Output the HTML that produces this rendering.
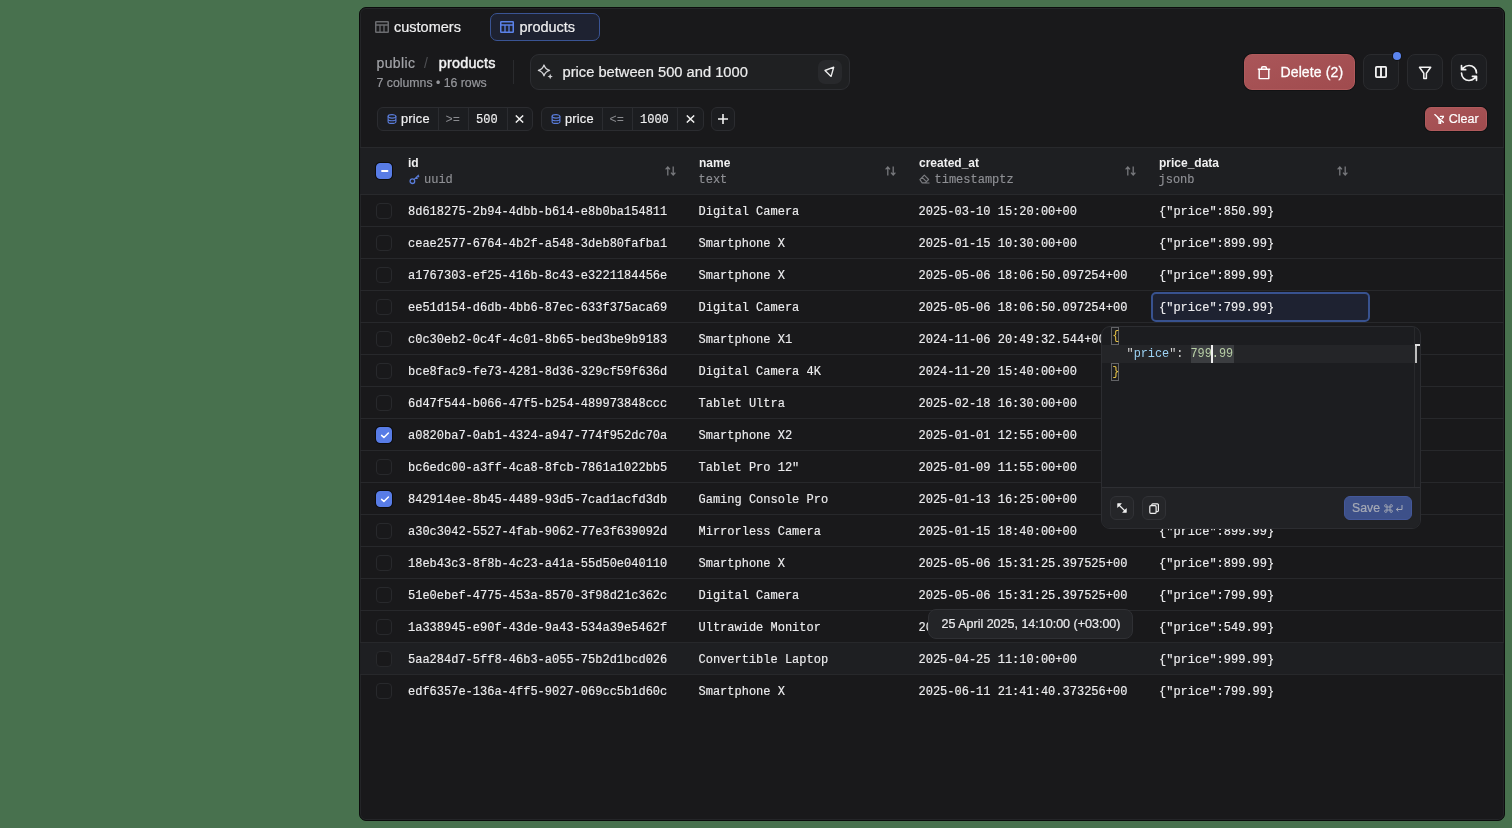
<!DOCTYPE html>
<html><head><meta charset="utf-8">
<style>
*{box-sizing:border-box;margin:0;padding:0}
html,body{width:1512px;height:828px;overflow:hidden;background:#48714e}
body{position:relative;font-family:"Liberation Sans",sans-serif;color:#ececee}
#w{position:absolute;left:0;top:0;width:1512px;height:828px;will-change:transform}
.a{position:absolute;white-space:nowrap;line-height:1}
.m{font-family:"Liberation Mono",monospace}
svg{display:block}
.panel{position:absolute;left:359px;top:7px;width:1146px;height:814px;background:#19191b;border:1px solid #0b0b0c;border-radius:7px;overflow:hidden}
.panel-in{position:absolute;left:0;top:0;right:0;bottom:0;border:1px solid #242528;border-radius:6px}
.btn{position:absolute;top:54px;width:36px;height:36px;border:1px solid #2a2b2e;border-radius:8px;background:#1d1e21}
.chip{position:absolute;top:107px;height:24px;border:1px solid #2b2c30;border-radius:6px;background:#1c1d20}
.dv{position:absolute;top:108px;width:1px;height:22px;background:#2b2c30}
.cb{position:absolute;left:376px;width:16px;height:16px;border:1px solid #28292c;border-radius:4px;background:#19191b}
.cb.on{background:#587ce6;border-color:#587ce6;box-shadow:0 0 0 1px #0c0c0d}
.cb svg{position:absolute;left:2px;top:2px}
.row{position:absolute;left:360px;width:1144px;height:32px;border-bottom:1px solid #27282b}
.row.hov{background:#1e1f22}
.t{position:absolute;top:206px;font-family:"Liberation Mono",monospace;font-size:12px;line-height:1;white-space:nowrap;color:#ededef;-webkit-text-stroke:0.15px currentColor}
.sort{position:absolute;top:166px}
.ss{-webkit-text-stroke:0.2px currentColor}
.ms{-webkit-text-stroke:0.15px currentColor}
</style></head>
<body>
<div id="w">
<div class="panel"><div class="panel-in"></div></div>

<!-- tabs -->
<svg class="a" style="left:375px;top:21px" width="14" height="12" viewBox="0 0 14 12"><rect x="0.75" y="0.75" width="12.5" height="10.5" rx="0.5" fill="none" stroke="#6b6c70" stroke-width="1.5"/><line x1="0.5" y1="4" x2="13.5" y2="4" stroke="#6b6c70" stroke-width="1.5"/><line x1="5" y1="4" x2="5" y2="11.5" stroke="#6b6c70" stroke-width="1.3"/><line x1="9" y1="4" x2="9" y2="11.5" stroke="#6b6c70" stroke-width="1.3"/></svg>
<div class="a ss" style="left:394px;top:19.6px;font-size:14.5px;color:#f0f0f1">customers</div>
<div class="a" style="left:490px;top:13px;width:110px;height:28px;background:#1e2231;border:1px solid #3a5494;border-radius:7px"></div>
<svg class="a" style="left:500px;top:21px" width="14" height="12" viewBox="0 0 14 12"><rect x="0.75" y="0.75" width="12.5" height="10.5" rx="0.5" fill="none" stroke="#5b82ea" stroke-width="1.5"/><line x1="0.5" y1="4" x2="13.5" y2="4" stroke="#5b82ea" stroke-width="1.5"/><line x1="5" y1="4" x2="5" y2="11.5" stroke="#5b82ea" stroke-width="1.3"/><line x1="9" y1="4" x2="9" y2="11.5" stroke="#5b82ea" stroke-width="1.3"/></svg>
<div class="a ss" style="left:519.5px;top:19.6px;font-size:14.5px;color:#f0f0f1">products</div>

<!-- breadcrumb -->
<div class="a ss" style="left:376.5px;top:56px;font-size:14px;letter-spacing:0.4px;color:#a3a4a9">public</div>
<div class="a" style="left:424px;top:56px;font-size:14px;color:#4f5054">/</div>
<div class="a" style="left:438.8px;top:56px;font-size:14.4px;letter-spacing:0.2px;-webkit-text-stroke:0.45px currentColor;color:#f2f2f3">products</div>
<div class="a ss" style="left:376.5px;top:77px;font-size:12.3px;color:#96979c">7 columns • 16 rows</div>
<div class="a" style="left:513px;top:60px;width:1px;height:24px;background:#2a2b2e"></div>

<!-- search -->
<div class="a" style="left:530px;top:54px;width:320px;height:36px;border:1px solid #2d2e32;border-radius:9px;background:#1f2022"></div>
<svg class="a" style="left:536px;top:62px" width="18" height="18" viewBox="0 0 18 18"><path d="M8 3 Q9.3 7.1 13.6 8.4 Q9.3 9.7 8 13.8 Q6.7 9.7 2.4 8.4 Q6.7 7.1 8 3Z" fill="none" stroke="#d2d2d5" stroke-width="1.3" stroke-linejoin="round"/><path d="M14.2 11.8 Q14.5 14.3 16.9 14.6 Q14.5 14.9 14.2 17.3 Q13.9 14.9 11.5 14.6 Q13.9 14.3 14.2 11.8Z" fill="#cfcfd2"/></svg>
<div class="a ss" style="left:562.5px;top:64.5px;font-size:14.7px;color:#ededee">price between 500 and 1000</div>
<div class="a" style="left:817.5px;top:60px;width:24px;height:24px;border-radius:7px;background:#28292c"></div>
<svg class="a" style="left:820px;top:63px" width="18" height="18" viewBox="0 0 18 18"><path d="M5 7.5 L13.7 4.2 L11.1 13.4 Z" fill="none" stroke="#ededee" stroke-width="1.35" stroke-linejoin="round"/></svg>

<!-- right buttons -->
<div class="a" style="left:1244px;top:54px;width:111px;height:36px;border-radius:8px;background:linear-gradient(160deg,#aa5659,#a04b4e);border:1px solid #b05a5c;box-shadow:0 0 0 1px #111214"></div>
<svg class="a" style="left:1257px;top:65.8px" width="14" height="14" viewBox="0 0 14 14"><path d="M0.8 3.2 H13.2 M4.6 3.2 V2 Q4.6 0.8 5.8 0.8 H8.2 Q9.4 0.8 9.4 2 V3.2 M2.2 3.2 V12.6 H11.8 V3.2" fill="none" stroke="#fff" stroke-width="1.45" stroke-linejoin="round"/></svg>
<div class="a" style="left:1280.5px;top:64.8px;font-size:14px;letter-spacing:0.12px;color:#fff;-webkit-text-stroke:0.3px #fff">Delete (2)</div>
<div class="btn" style="left:1363px"></div>
<svg class="a" style="left:1375px;top:66px" width="12" height="12" viewBox="0 0 12 12"><rect x="0.9" y="0.9" width="10.2" height="10.2" rx="0.8" fill="none" stroke="#f2f2f2" stroke-width="1.8"/><line x1="6" y1="0.9" x2="6" y2="11.1" stroke="#f2f2f2" stroke-width="1.9"/></svg>
<div class="a" style="left:1393px;top:51.7px;width:8px;height:8px;border-radius:50%;background:#5b84ee;box-shadow:0 0 0 1px #121214"></div>
<div class="btn" style="left:1407px"></div>
<svg class="a" style="left:1418px;top:65.5px" width="14" height="14" viewBox="0 0 14 14"><path d="M1.5 1.3 H12.7 L8.4 7.3 V12.6 H5.8 V7.3 Z" fill="none" stroke="#f2f2f2" stroke-width="1.5" stroke-linejoin="round"/></svg>
<div class="btn" style="left:1451px"></div>
<svg class="a" style="left:1459.2px;top:63px" width="20" height="20" viewBox="0 0 24 24"><path d="M21 12a9 9 0 0 0-9-9 9.75 9.75 0 0 0-6.74 2.74L3 8 M3 3v5h5 M3 12a9 9 0 0 0 9 9 9.75 9.75 0 0 0 6.74-2.74L21 16 M16 16h5v5" fill="none" stroke="#f2f2f2" stroke-width="2" stroke-linecap="round" stroke-linejoin="round"/></svg>

<!-- chips -->
<div class="chip" style="left:377px;width:156px"></div>
<div class="dv" style="left:437.5px"></div><div class="dv" style="left:467.5px"></div><div class="dv" style="left:506.5px"></div>
<svg class="a" style="left:386.5px;top:114px" width="10" height="10" viewBox="0 0 11 11"><ellipse cx="5.5" cy="2.6" rx="4.3" ry="1.9" fill="none" stroke="#5a7ddb" stroke-width="1.2"/><path d="M1.2 2.6 V8.4 C1.2 9.5 3.1 10.3 5.5 10.3 C7.9 10.3 9.8 9.5 9.8 8.4 V2.6 M1.2 5.5 C1.2 6.6 3.1 7.4 5.5 7.4 C7.9 7.4 9.8 6.6 9.8 5.5" fill="none" stroke="#5a7ddb" stroke-width="1.2"/></svg>
<div class="a ss" style="left:401px;top:113px;font-size:12.8px;letter-spacing:0.2px;color:#f0f0f1">price</div>
<div class="a m" style="left:445.5px;top:114.2px;font-size:12px;color:#8b8c90">&gt;=</div>
<div class="a m ms" style="left:476px;top:114.2px;font-size:12px;color:#f0f0f1">500</div>
<svg class="a" style="left:515px;top:115px" width="9" height="8" viewBox="0 0 9 8"><path d="M0.8 0.4 L8.2 7.6 M8.2 0.4 L0.8 7.6" stroke="#f0f0f0" stroke-width="1.4"/></svg>

<div class="chip" style="left:540.5px;width:163px"></div>
<div class="dv" style="left:601.5px"></div><div class="dv" style="left:631.5px"></div><div class="dv" style="left:676.5px"></div>
<svg class="a" style="left:550.5px;top:114px" width="10" height="10" viewBox="0 0 11 11"><ellipse cx="5.5" cy="2.6" rx="4.3" ry="1.9" fill="none" stroke="#5a7ddb" stroke-width="1.2"/><path d="M1.2 2.6 V8.4 C1.2 9.5 3.1 10.3 5.5 10.3 C7.9 10.3 9.8 9.5 9.8 8.4 V2.6 M1.2 5.5 C1.2 6.6 3.1 7.4 5.5 7.4 C7.9 7.4 9.8 6.6 9.8 5.5" fill="none" stroke="#5a7ddb" stroke-width="1.2"/></svg>
<div class="a ss" style="left:565px;top:113px;font-size:12.8px;letter-spacing:0.2px;color:#f0f0f1">price</div>
<div class="a m" style="left:609.5px;top:114.2px;font-size:12px;color:#8b8c90">&lt;=</div>
<div class="a m ms" style="left:640px;top:114.2px;font-size:12px;color:#f0f0f1">1000</div>
<svg class="a" style="left:686px;top:115px" width="9" height="8" viewBox="0 0 9 8"><path d="M0.8 0.4 L8.2 7.6 M8.2 0.4 L0.8 7.6" stroke="#f0f0f0" stroke-width="1.4"/></svg>

<div class="chip" style="left:711px;width:24px"></div>
<svg class="a" style="left:718px;top:114px" width="10" height="10" viewBox="0 0 10 10"><path d="M5 0 V10 M0 5 H10" stroke="#f2f2f2" stroke-width="1.6"/></svg>

<div class="a" style="left:1425px;top:107px;width:62px;height:24px;border-radius:6px;background:linear-gradient(160deg,#aa5659,#a04b4e);border:1px solid #b05a5c;box-shadow:0 0 0 1px #111214"></div>
<svg class="a" style="left:1434px;top:114px" width="10" height="10" viewBox="0 0 10 10"><path d="M0.8 0.6 L9.3 8.3 M6.4 2.4 H9.8 L8 4.6 M3.4 3.2 L5.1 5.6 V10.4 H6.6 V7.2" fill="none" stroke="#fff" stroke-width="1.3" stroke-linejoin="round" stroke-linecap="round"/></svg>
<div class="a ss" style="left:1448.8px;top:113.1px;font-size:12.5px;color:#fff">Clear</div>

<!-- table header -->
<div class="a" style="left:360px;top:147px;width:1144px;height:48px;background:#1e1f22;border-top:1px solid #28292c;border-bottom:1px solid #28292c"></div>
<div class="cb on" style="top:163px"><svg width="12" height="12" viewBox="0 0 12 12"><path d="M3 5 H8.5" stroke="#fff" stroke-width="1.8" stroke-linecap="round"/></svg></div>
<div class="a" style="left:408px;top:156.7px;font-size:12px;font-weight:bold;color:#f0f0f1">id</div>
<svg class="a" style="left:409px;top:174px" width="11" height="11" viewBox="0 0 11 11"><circle cx="3.4" cy="7.2" r="2.3" fill="none" stroke="#5a7ddb" stroke-width="1.3"/><path d="M5 5.6 L9.8 0.8 M7.4 3.2 L8.7 4.5 M8.8 1.8 L10.1 3.1" fill="none" stroke="#5a7ddb" stroke-width="1.2"/></svg>
<div class="a m" style="left:424px;top:173.7px;font-size:12px;color:#8f9095;-webkit-text-stroke:0.15px currentColor">uuid</div>
<div class="a" style="left:699px;top:156.7px;font-size:12px;font-weight:bold;color:#f0f0f1">name</div>
<div class="a m" style="left:698.5px;top:173.7px;font-size:12px;color:#8f9095;-webkit-text-stroke:0.15px currentColor">text</div>
<div class="a" style="left:919px;top:156.7px;font-size:12px;font-weight:bold;color:#f0f0f1">created_at</div>
<svg class="a" style="left:919px;top:174px" width="11" height="10" viewBox="0 0 11 10"><path d="M0.9 5.6 L5.3 1.2 L9.6 5.5 L6.2 8.9 H3.2 Z M3.1 3.4 L7.4 7.7 M5.5 9 H10.5" fill="none" stroke="#7b7c80" stroke-width="1.1" stroke-linejoin="round"/></svg>
<div class="a m" style="left:934.5px;top:173.7px;font-size:12px;color:#8f9095;-webkit-text-stroke:0.15px currentColor">timestamptz</div>
<div class="a" style="left:1159px;top:156.7px;font-size:12px;font-weight:bold;color:#f0f0f1">price_data</div>
<div class="a m" style="left:1158.5px;top:173.7px;font-size:12px;color:#8f9095;-webkit-text-stroke:0.15px currentColor">jsonb</div>
<svg class="sort" style="left:665px" width="11" height="10" viewBox="0 0 11 10"><path d="M2.8 9.5 V1.2 M0.6 3.4 L2.8 1 L5 3.4 M8.2 0.5 V8.8 M6 6.6 L8.2 9 L10.4 6.6" fill="none" stroke="#77787c" stroke-width="1.3"/></svg>
<svg class="sort" style="left:885px" width="11" height="10" viewBox="0 0 11 10"><path d="M2.8 9.5 V1.2 M0.6 3.4 L2.8 1 L5 3.4 M8.2 0.5 V8.8 M6 6.6 L8.2 9 L10.4 6.6" fill="none" stroke="#77787c" stroke-width="1.3"/></svg>
<svg class="sort" style="left:1125px" width="11" height="10" viewBox="0 0 11 10"><path d="M2.8 9.5 V1.2 M0.6 3.4 L2.8 1 L5 3.4 M8.2 0.5 V8.8 M6 6.6 L8.2 9 L10.4 6.6" fill="none" stroke="#77787c" stroke-width="1.3"/></svg>
<svg class="sort" style="left:1337px" width="11" height="10" viewBox="0 0 11 10"><path d="M2.8 9.5 V1.2 M0.6 3.4 L2.8 1 L5 3.4 M8.2 0.5 V8.8 M6 6.6 L8.2 9 L10.4 6.6" fill="none" stroke="#77787c" stroke-width="1.3"/></svg>

<div class="row" style="top:195px"></div>
<div class="row" style="top:227px"></div>
<div class="row" style="top:259px"></div>
<div class="row" style="top:291px"></div>
<div class="row" style="top:323px"></div>
<div class="row" style="top:355px"></div>
<div class="row" style="top:387px"></div>
<div class="row" style="top:419px"></div>
<div class="row" style="top:451px"></div>
<div class="row" style="top:483px"></div>
<div class="row" style="top:515px"></div>
<div class="row" style="top:547px"></div>
<div class="row" style="top:579px"></div>
<div class="row" style="top:611px"></div>
<div class="row hov" style="top:643px"></div>
<div class="row" style="top:675px;border-bottom:0"></div>
<div class="cb" style="top:203px"></div>
<div class="t" style="left:408px;top:206px">8d618275-2b94-4dbb-b614-e8b0ba154811</div><div class="t" style="left:698.5px;top:206px">Digital Camera</div><div class="t" style="left:918.5px;top:206px">2025-03-10 15:20:00+00</div>
<div class="t" style="left:1159px;top:206px">{&quot;price&quot;:850.99}</div>
<div class="cb" style="top:235px"></div>
<div class="t" style="left:408px;top:238px">ceae2577-6764-4b2f-a548-3deb80fafba1</div><div class="t" style="left:698.5px;top:238px">Smartphone X</div><div class="t" style="left:918.5px;top:238px">2025-01-15 10:30:00+00</div>
<div class="t" style="left:1159px;top:238px">{&quot;price&quot;:899.99}</div>
<div class="cb" style="top:267px"></div>
<div class="t" style="left:408px;top:270px">a1767303-ef25-416b-8c43-e3221184456e</div><div class="t" style="left:698.5px;top:270px">Smartphone X</div><div class="t" style="left:918.5px;top:270px">2025-05-06 18:06:50.097254+00</div>
<div class="t" style="left:1159px;top:270px">{&quot;price&quot;:899.99}</div>
<div class="cb" style="top:299px"></div>
<div class="t" style="left:408px;top:302px">ee51d154-d6db-4bb6-87ec-633f375aca69</div><div class="t" style="left:698.5px;top:302px">Digital Camera</div><div class="t" style="left:918.5px;top:302px">2025-05-06 18:06:50.097254+00</div>
<div class="cb" style="top:331px"></div>
<div class="t" style="left:408px;top:334px">c0c30eb2-0c4f-4c01-8b65-bed3be9b9183</div><div class="t" style="left:698.5px;top:334px">Smartphone X1</div><div class="t" style="left:918.5px;top:334px">2024-11-06 20:49:32.544+00</div>
<div class="cb" style="top:363px"></div>
<div class="t" style="left:408px;top:366px">bce8fac9-fe73-4281-8d36-329cf59f636d</div><div class="t" style="left:698.5px;top:366px">Digital Camera 4K</div><div class="t" style="left:918.5px;top:366px">2024-11-20 15:40:00+00</div>
<div class="cb" style="top:395px"></div>
<div class="t" style="left:408px;top:398px">6d47f544-b066-47f5-b254-489973848ccc</div><div class="t" style="left:698.5px;top:398px">Tablet Ultra</div><div class="t" style="left:918.5px;top:398px">2025-02-18 16:30:00+00</div>
<div class="cb on" style="top:427px"><svg width="12" height="12" viewBox="0 0 12 12"><path d="M2.6 5.4 L4.9 7.5 L9.4 3" fill="none" stroke="#fff" stroke-width="1.5" stroke-linecap="round" stroke-linejoin="round"/></svg></div>
<div class="t" style="left:408px;top:430px">a0820ba7-0ab1-4324-a947-774f952dc70a</div><div class="t" style="left:698.5px;top:430px">Smartphone X2</div><div class="t" style="left:918.5px;top:430px">2025-01-01 12:55:00+00</div>
<div class="cb" style="top:459px"></div>
<div class="t" style="left:408px;top:462px">bc6edc00-a3ff-4ca8-8fcb-7861a1022bb5</div><div class="t" style="left:698.5px;top:462px">Tablet Pro 12&quot;</div><div class="t" style="left:918.5px;top:462px">2025-01-09 11:55:00+00</div>
<div class="cb on" style="top:491px"><svg width="12" height="12" viewBox="0 0 12 12"><path d="M2.6 5.4 L4.9 7.5 L9.4 3" fill="none" stroke="#fff" stroke-width="1.5" stroke-linecap="round" stroke-linejoin="round"/></svg></div>
<div class="t" style="left:408px;top:494px">842914ee-8b45-4489-93d5-7cad1acfd3db</div><div class="t" style="left:698.5px;top:494px">Gaming Console Pro</div><div class="t" style="left:918.5px;top:494px">2025-01-13 16:25:00+00</div>
<div class="cb" style="top:523px"></div>
<div class="t" style="left:408px;top:526px">a30c3042-5527-4fab-9062-77e3f639092d</div><div class="t" style="left:698.5px;top:526px">Mirrorless Camera</div><div class="t" style="left:918.5px;top:526px">2025-01-15 18:40:00+00</div>
<div class="t" style="left:1159px;top:526px">{&quot;price&quot;:899.99}</div>
<div class="cb" style="top:555px"></div>
<div class="t" style="left:408px;top:558px">18eb43c3-8f8b-4c23-a41a-55d50e040110</div><div class="t" style="left:698.5px;top:558px">Smartphone X</div><div class="t" style="left:918.5px;top:558px">2025-05-06 15:31:25.397525+00</div>
<div class="t" style="left:1159px;top:558px">{&quot;price&quot;:899.99}</div>
<div class="cb" style="top:587px"></div>
<div class="t" style="left:408px;top:590px">51e0ebef-4775-453a-8570-3f98d21c362c</div><div class="t" style="left:698.5px;top:590px">Digital Camera</div><div class="t" style="left:918.5px;top:590px">2025-05-06 15:31:25.397525+00</div>
<div class="t" style="left:1159px;top:590px">{&quot;price&quot;:799.99}</div>
<div class="cb" style="top:619px"></div>
<div class="t" style="left:408px;top:622px">1a338945-e90f-43de-9a43-534a39e5462f</div><div class="t" style="left:698.5px;top:622px">Ultrawide Monitor</div><div class="t" style="left:918.5px;top:622px">2025-04-25 14:10:00+00</div>
<div class="t" style="left:1159px;top:622px">{&quot;price&quot;:549.99}</div>
<div class="cb" style="top:651px"></div>
<div class="t" style="left:408px;top:654px">5aa284d7-5ff8-46b3-a055-75b2d1bcd026</div><div class="t" style="left:698.5px;top:654px">Convertible Laptop</div><div class="t" style="left:918.5px;top:654px">2025-04-25 11:10:00+00</div>
<div class="t" style="left:1159px;top:654px">{&quot;price&quot;:999.99}</div>
<div class="cb" style="top:683px"></div>
<div class="t" style="left:408px;top:686px">edf6357e-136a-4ff5-9027-069cc5b1d60c</div><div class="t" style="left:698.5px;top:686px">Smartphone X</div><div class="t" style="left:918.5px;top:686px">2025-06-11 21:41:40.373256+00</div>
<div class="t" style="left:1159px;top:686px">{&quot;price&quot;:799.99}</div>

<!-- selected cell -->
<div class="a" style="left:1151px;top:292px;width:219px;height:30px;border:2px solid #38528f;border-radius:5px;background:#1e2231"></div>
<div class="t" style="left:1159px;top:302px">{"price":799.99}</div>

<!-- editor popup -->
<div class="a" style="left:1101px;top:326px;width:320px;height:203px;background:#1c1d20;border:1px solid #2c2d31;border-radius:9px;overflow:hidden">
  <div class="a" style="left:0;top:160px;width:318px;height:41px;background:#212225;border-top:1px solid #2e2f33"></div>
  <div class="a" style="left:0;top:18px;width:312px;height:18px;background:#242528"></div>
  <div class="a" style="left:312px;top:0;width:1px;height:160px;background:#28292c"></div>
</div>
<div class="a" style="left:1111px;top:327px;width:8px;height:18px;border:1px solid #626366"></div>
<div class="a" style="left:1111px;top:363px;width:8px;height:18px;border:1px solid #626366"></div>
<div class="a" style="left:1190.5px;top:345px;width:43px;height:18px;background:#3b3d40"></div>
<div class="a m cm" style="left:1112.3px;top:327px;font-size:11.85px;line-height:18px;color:#d4d4d4;white-space:pre"><span style="color:#e3c046">{</span>
  "<span style="color:#9cd3f5">price</span>": <span style="color:#b8cfa6">799.99</span>
<span style="color:#e3c046">}</span></div>
<div class="a" style="left:1211px;top:345px;width:2px;height:18px;background:#f0f0f0"></div>
<div class="a" style="left:1415px;top:344px;width:2px;height:19px;background:#bdbdbd"></div>
<div class="a" style="left:1415px;top:344px;width:5px;height:2px;background:#e0e0e0"></div>
<div class="a" style="left:1109.5px;top:496px;width:24px;height:24px;border:1px solid #313236;border-radius:6px;background:#252629"></div>
<svg class="a" style="left:1116.5px;top:503px" width="10" height="10" viewBox="0 0 10 10"><path d="M1.2 1.2 L8.8 8.8" fill="none" stroke="#f0f0f0" stroke-width="1.3"/><path d="M0.6 0.6 H4.4 L0.6 4.4 Z M9.4 9.4 H5.6 L9.4 5.6 Z" fill="#f0f0f0" stroke="#f0f0f0" stroke-width="0.6" stroke-linejoin="round"/></svg>
<div class="a" style="left:1141.5px;top:496px;width:24px;height:24px;border:1px solid #313236;border-radius:6px;background:#252629"></div>
<svg class="a" style="left:1148.5px;top:502.5px" width="11" height="11" viewBox="0 0 11 11"><rect x="0.8" y="2.7" width="6.3" height="7.6" rx="1" fill="none" stroke="#f0f0f0" stroke-width="1.2"/><path d="M2.8 2.7 V1.8 A1 1 0 0 1 3.8 0.8 H8.4 A1 1 0 0 1 9.4 1.8 V7.6 A1 1 0 0 1 8.4 8.6 H7.1" fill="none" stroke="#f0f0f0" stroke-width="1.2"/></svg>
<div class="a" style="left:1344px;top:496px;width:67.5px;height:24px;border-radius:6px;background:#3d5089;border:1px solid #44589a"></div>
<div class="a ss" style="left:1352px;top:502px;font-size:12.3px;color:#a6aab6">Save</div>
<svg class="a" style="left:1384px;top:504px" width="9" height="9" viewBox="0 0 9 9"><path d="M3 3 H6 V6 H3 Z M3 3 V1.8 A1.2 1.2 0 1 0 1.8 3 H3 M6 3 H7.2 A1.2 1.2 0 1 0 6 1.8 V3 M6 6 V7.2 A1.2 1.2 0 1 0 7.2 6 H6 M3 6 H1.8 A1.2 1.2 0 1 0 3 7.2 V6" fill="none" stroke="#a6aab6" stroke-width="0.9"/></svg>
<svg class="a" style="left:1394.5px;top:504px" width="8" height="9" viewBox="0 0 8 9"><path d="M7 1 V5.5 H1.5 M3.3 3.6 L1.3 5.5 L3.3 7.4" fill="none" stroke="#a6aab6" stroke-width="1"/></svg>

<!-- tooltip -->
<div class="a" style="left:928px;top:609px;width:205px;height:30px;background:#232427;border:1px solid #2f3034;border-radius:8px"></div>
<div class="a ss" style="left:941.5px;top:618.3px;font-size:12.5px;color:#ececee">25 April 2025, 14:10:00 (+03:00)</div>
</div>
</body></html>
